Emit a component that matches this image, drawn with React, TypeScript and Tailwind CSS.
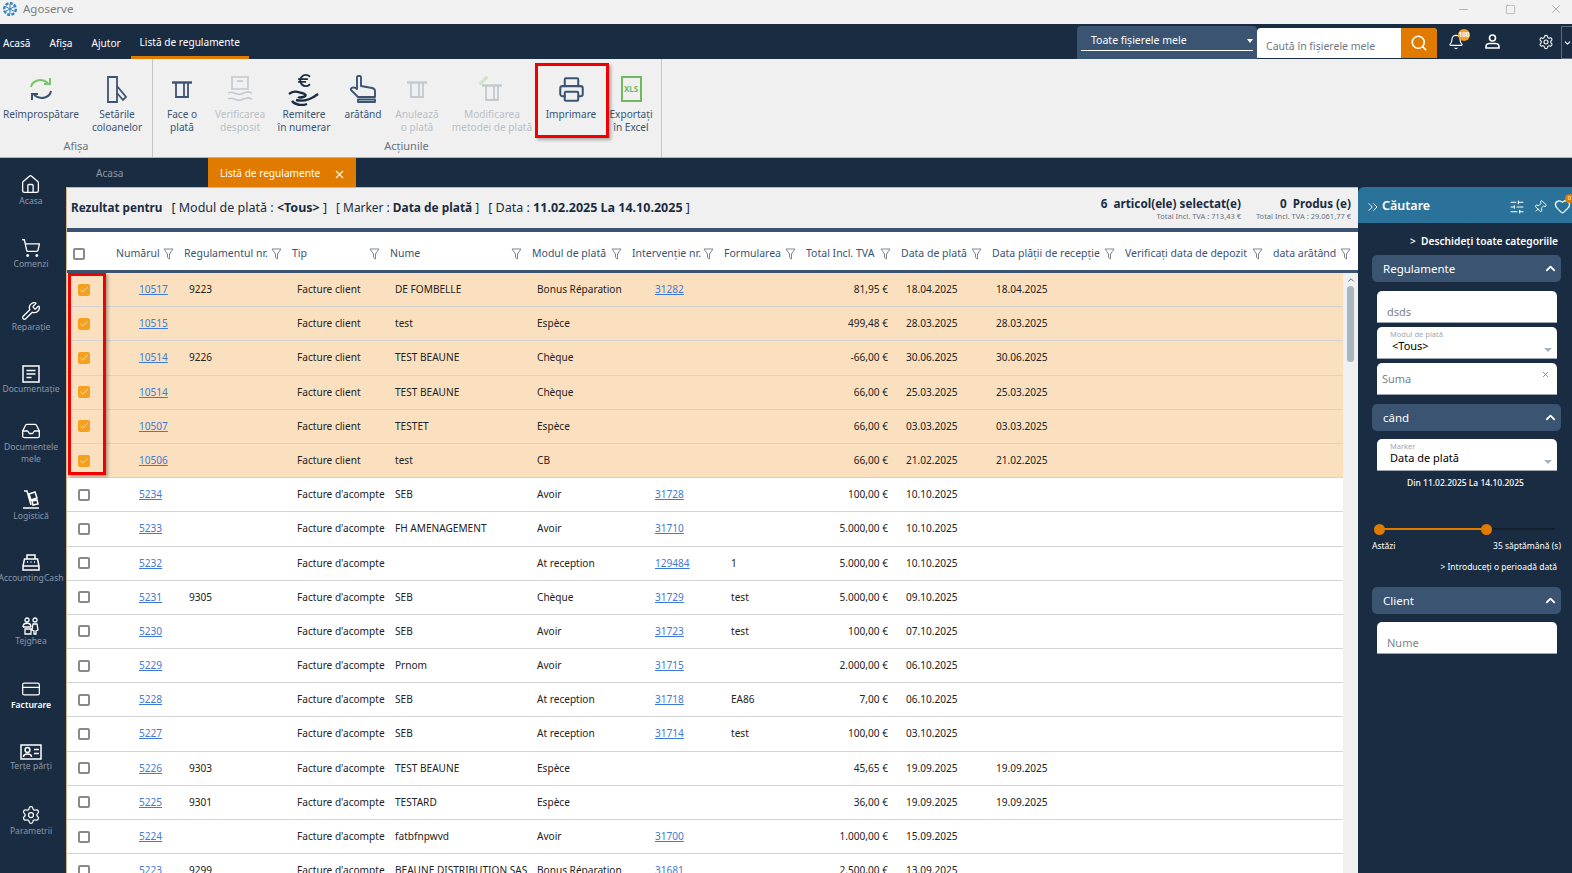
import { Check, ChevronDown, ChevronUp, Home, Inbox, Minus, Pin, Printer, Search, Settings, ShoppingCart, Square, Wrench, X, Bell, CreditCard, SlidersHorizontal, Heart, ChevronsRight, Euro } from 'lucide-react';
import type { ReactNode } from 'react';

const font = { fontFamily: '"Noto Sans", sans-serif' };

type Row = {
  num: string;
  reg?: string;
  tip: string;
  nume?: string;
  mod: string;
  iv?: string;
  form?: string;
  total: string;
  data: string;
  rec?: string;
  sel?: boolean;
};

const rows: Row[] = [
  { num: '10517', reg: '9223', tip: 'Facture client', nume: 'DE FOMBELLE', mod: 'Bonus Réparation', iv: '31282', total: '81,95 €', data: '18.04.2025', rec: '18.04.2025', sel: true },
  { num: '10515', tip: 'Facture client', nume: 'test', mod: 'Espèce', total: '499,48 €', data: '28.03.2025', rec: '28.03.2025', sel: true },
  { num: '10514', reg: '9226', tip: 'Facture client', nume: 'TEST BEAUNE', mod: 'Chèque', total: '-66,00 €', data: '30.06.2025', rec: '30.06.2025', sel: true },
  { num: '10514', tip: 'Facture client', nume: 'TEST BEAUNE', mod: 'Chèque', total: '66,00 €', data: '25.03.2025', rec: '25.03.2025', sel: true },
  { num: '10507', tip: 'Facture client', nume: 'TESTET', mod: 'Espèce', total: '66,00 €', data: '03.03.2025', rec: '03.03.2025', sel: true },
  { num: '10506', tip: 'Facture client', nume: 'test', mod: 'CB', total: '66,00 €', data: '21.02.2025', rec: '21.02.2025', sel: true },
  { num: '5234', tip: "Facture d'acompte", nume: 'SEB', mod: 'Avoir', iv: '31728', total: '100,00 €', data: '10.10.2025' },
  { num: '5233', tip: "Facture d'acompte", nume: 'FH AMENAGEMENT', mod: 'Avoir', iv: '31710', total: '5.000,00 €', data: '10.10.2025' },
  { num: '5232', tip: "Facture d'acompte", mod: 'At reception', iv: '129484', form: '1', total: '5.000,00 €', data: '10.10.2025' },
  { num: '5231', reg: '9305', tip: "Facture d'acompte", nume: 'SEB', mod: 'Chèque', iv: '31729', form: 'test', total: '5.000,00 €', data: '09.10.2025' },
  { num: '5230', tip: "Facture d'acompte", nume: 'SEB', mod: 'Avoir', iv: '31723', form: 'test', total: '100,00 €', data: '07.10.2025' },
  { num: '5229', tip: "Facture d'acompte", nume: 'Prnom', mod: 'Avoir', iv: '31715', total: '2.000,00 €', data: '06.10.2025' },
  { num: '5228', tip: "Facture d'acompte", nume: 'SEB', mod: 'At reception', iv: '31718', form: 'EA86', total: '7,00 €', data: '06.10.2025' },
  { num: '5227', tip: "Facture d'acompte", nume: 'SEB', mod: 'At reception', iv: '31714', form: 'test', total: '100,00 €', data: '03.10.2025' },
  { num: '5226', reg: '9303', tip: "Facture d'acompte", nume: 'TEST BEAUNE', mod: 'Espèce', total: '45,65 €', data: '19.09.2025', rec: '19.09.2025' },
  { num: '5225', reg: '9301', tip: "Facture d'acompte", nume: 'TESTARD', mod: 'Espèce', total: '36,00 €', data: '19.09.2025', rec: '19.09.2025' },
  { num: '5224', tip: "Facture d'acompte", nume: 'fatbfnpwvd', mod: 'Avoir', iv: '31700', total: '1.000,00 €', data: '15.09.2025' },
  { num: '5223', reg: '9299', tip: "Facture d'acompte", nume: 'BEAUNE DISTRIBUTION SAS', mod: 'Bonus Réparation', iv: '31681', total: '2.500,00 €', data: '13.09.2025' },
];

const headers = [
  { label: 'Numărul', w: 'w-[68px]' },
  { label: 'Regulamentul nr.', w: 'w-[108px]' },
  { label: 'Tip', w: 'w-[98px]' },
  { label: 'Nume', w: 'w-[142px]' },
  { label: 'Modul de plată', w: 'w-[100px]' },
  { label: 'Intervenție nr.', w: 'w-[92px]' },
  { label: 'Formularea', w: 'w-[82px]' },
  { label: 'Total Incl. TVA', w: 'w-[95px]' },
  { label: 'Data de plată', w: 'w-[91px]' },
  { label: 'Data plății de recepție', w: 'w-[133px]' },
  { label: 'Verificați data de depozit', w: 'w-[148px]' },
  { label: 'data arătând', w: 'w-[88px]' },
];

function FilterIcon() {
  return (
    <svg width="11" height="12" viewBox="0 0 11 12" fill="none" stroke="#7d8794" strokeWidth="1">
      <path d="M1 1h9L6.500 6v5L4.500 9.500V6z" />
    </svg>
  );
}

function Box({ checked }: { checked?: boolean }) {
  if (checked) {
    return (
      <div className="flex h-3 w-3 items-center justify-center rounded-[2px] bg-[#f5a11f]">
        <Check size={10} color="#fde7c4" strokeWidth={2} />
      </div>
    );
  }
  return <div className="h-3 w-3 rounded-[2px] border-2 border-[#8a8a8a] bg-white" />;
}

function Receipt({ color }: { color: string }) {
  return (
    <svg width="20" height="17" viewBox="0 0 20 17" fill="none" stroke={color} strokeWidth="1.800">
      <path d="M0 1.500h20" strokeWidth="2.400" />
      <path d="M4 2v14h12V2" />
      <path d="M12 2v14" />
    </svg>
  );
}

function RibbonButton({ w, icon, lines, off }: { w: string; icon: ReactNode; lines: string[]; off?: boolean }) {
  return (
    <div className={`flex shrink-0 flex-col items-center ${w}`}>
      <div className="mt-[13px] mb-[2px] flex h-[34px] items-center justify-center">{icon}</div>
      {lines.map((l) => (
        <div key={l} className={`h-[13px] whitespace-nowrap text-[10.1px] leading-[13px] ${off ? 'text-[#b9bfc6]' : 'text-[#3a5472]'}`}>
          {l}
        </div>
      ))}
    </div>
  );
}

function NavItem({ icon, lines, active }: { icon: ReactNode; lines: string[]; active?: boolean }) {
  return (
    <div className="flex h-[63px] flex-col items-center justify-center">
      {icon}
      {lines.map((l) => (
        <div key={l} className={`whitespace-nowrap text-[8.6px] leading-[12px] ${active ? 'font-semibold text-white' : 'text-[#8b98a8]'}`}>
          {l}
        </div>
      ))}
    </div>
  );
}

function SectionHead({ label }: { label: string }) {
  return (
    <div className="ml-[14px] mr-[11px] flex h-[27px] items-center justify-between rounded-[5px] bg-[#3a5472] pl-[11px] pr-[3px] text-[11.5px] text-white">
      {label}
      <ChevronUp size={15} strokeWidth={3} />
    </div>
  );
}

function Field({ h, label, value, placeholder, caret, clear, pad }: { h: string; label?: string; value?: string; placeholder?: string; caret?: boolean; clear?: boolean; pad?: string }) {
  return (
    <div className={`relative ml-[19px] mr-[15px] rounded-t-[5px] border-b border-[#9aa5b1] bg-white ${h}`}>
      {label && <div className="pl-[13px] pt-[3px] text-[7.5px] leading-[9px] text-[#a0a7b0]">{label}</div>}
      {value && <div className={`text-[11px] leading-[13px] text-black ${pad}`}>{value}</div>}
      {placeholder && <div className={`text-[11px] leading-[13px] text-[#7b838d] ${pad}`}>{placeholder}</div>}
      {caret && <div className="absolute bottom-[6px] right-[5px] h-0 w-0 border-x-[4px] border-t-[4px] border-x-transparent border-t-[#a9b2bb]" />}
      {clear && <X size={9} color="#5e6874" className="absolute right-[7px] top-[7px]" />}
    </div>
  );
}

function Tableau({ r }: { r: Row }) {
  return (
    <div className={`flex h-[34.2px] shrink-0 items-center border-b border-[#d3d3d3] text-[10.1px] text-[#222] ${r.sel ? 'bg-[#fae0bf]' : 'bg-white'}`}>
      <div className="w-[49px] shrink-0 pl-[11px]">
        <Box checked={r.sel} />
      </div>
      <div className="w-[68px] shrink-0 pl-[23px] text-[#3f7ad6] underline">{r.num}</div>
      <div className="w-[108px] shrink-0 pl-[5px]">{r.reg}</div>
      <div className="w-[98px] shrink-0 whitespace-nowrap pl-[5px]">{r.tip}</div>
      <div className="w-[142px] shrink-0 whitespace-nowrap pl-[5px]">{r.nume}</div>
      <div className="w-[100px] shrink-0 whitespace-nowrap pl-[5px]">{r.mod}</div>
      <div className="w-[92px] shrink-0 pl-[23px] text-[#3f7ad6] underline">{r.iv}</div>
      <div className="w-[82px] shrink-0 pl-[7px]">{r.form}</div>
      <div className="w-[95px] shrink-0 pr-[13px] text-right">{r.total}</div>
      <div className="w-[91px] shrink-0 pl-[5px]">{r.data}</div>
      <div className="w-[133px] shrink-0 pl-[4px]">{r.rec}</div>
    </div>
  );
}

export default function App() {
  return (
    <div className="relative flex h-[873px] w-[1572px] flex-col overflow-hidden bg-[#1a2c42]" style={font}>
      {/* title bar */}
      <div className="flex h-[24px] shrink-0 items-center bg-[#f2f2f2] pb-[6px] pl-[2px] text-[11.5px] text-[#7d7d7d]">
        <svg width="16" height="16" viewBox="0 0 16 16" fill="none" stroke="#2f86c0" strokeWidth="2.400">
          <circle cx="8" cy="8" r="5.800" strokeDasharray="3 1.400" />
          <path d="M8 3v10M3.500 5.500l9 5M12.500 5.500l-9 5" strokeWidth="1" />
        </svg>
        <span className="ml-[5px]">Agoserve</span>
        <div className="ml-auto flex items-center text-[#7d7d7d]">
          <Minus size={13} strokeWidth={1} className="mr-[35px]" />
          <Square size={11} strokeWidth={1} className="mr-[33px]" />
          <X size={14} strokeWidth={1} className="mr-[9px]" />
        </div>
      </div>

      {/* menu */}
      <div className="flex h-[35px] shrink-0 items-end bg-[#1a2c42] text-[10.1px] text-white">
        <div className="flex h-[35px] items-center pl-[3px] pt-[5px]">Acasă</div>
        <div className="ml-[19px] flex h-[35px] items-center pt-[5px]">Afișa</div>
        <div className="ml-[19px] flex h-[35px] items-center pt-[5px]">Ajutor</div>
        <div className="ml-[10px] flex h-[35px] w-[118px] items-center justify-center border-b-[3px] border-[#e07b00] pt-[5px]">Listă de regulamente</div>
        <div className="ml-auto flex h-[33px] w-[180px] flex-col rounded-t-[4px] bg-[#3a5472] px-[4px]">
          <div className="flex h-[25px] items-center justify-between border-b border-white pl-[10px] pt-[5px] text-[10.5px]">
            Toate fișierele mele
            <div className="h-0 w-0 border-x-[3.5px] border-t-[4px] border-x-transparent border-t-white" />
          </div>
        </div>
        <div className="mb-[1px] flex h-[30px] w-[180px] overflow-hidden rounded-t-[4px] bg-white">
          <div className="flex flex-1 items-center pl-[9px] pt-[7px] text-[10.5px] text-[#6f7782]">Caută în fișierele mele</div>
          <div className="flex w-[36px] items-center justify-center bg-[#e07b00]">
            <Search size={18} strokeWidth={2.2} />
          </div>
        </div>
        <div className="relative ml-[1px] flex h-[35px] w-[35px] items-center justify-center">
          <Bell size={16} strokeWidth={1.7} />
          <div className="absolute right-[3px] top-[5px] flex h-[12px] w-[12px] items-center justify-center overflow-hidden rounded-full bg-[#f5a11f] text-[6.5px] font-bold">100</div>
        </div>
        <div className="flex h-[35px] w-[38px] items-center justify-center">
          <svg width="15" height="15" viewBox="0 0 15 15" fill="none" stroke="#fff" strokeWidth="1.600">
            <circle cx="7.500" cy="4" r="3" />
            <path d="M1 14v-1.500c0-2 2-3 3.500-3h6c1.500 0 3.500 1 3.500 3V14z" />
          </svg>
        </div>
        <div className="flex h-[35px] w-[50px] items-center justify-center pl-[20px]">
          <Settings size={16} strokeWidth={1.6} />
        </div>
        <div className="flex h-[33px] w-[11px] items-center border border-r-0 border-[#5f6b78] pl-[1px]">
          <ChevronDown size={10} strokeWidth={3} />
        </div>
      </div>

      {/* ribbon */}
      <div className="flex h-[99px] shrink-0 border-b border-[#b5b5b5] bg-[#f0f0f0]">
        <div className="flex w-[153px] shrink-0 flex-col border-r border-[#c5c5c5]">
          <div className="flex">
            <RibbonButton
              w="w-[82px]"
              lines={['Reîmprospătare']}
              icon={
                <svg width="26" height="28" viewBox="0 0 26 28" fill="none" strokeWidth="2">
                  <path d="M3 12C4 6 13 2 20 8" stroke="#7cc36a" />
                  <path d="M16 9h6V3" stroke="#7cc36a" />
                  <path d="M23 16c-1 6-10 10-17 4" stroke="#3a5472" />
                  <path d="M10 19H4v6" stroke="#3a5472" />
                </svg>
              }
            />
            <RibbonButton
              w="w-[70px]"
              lines={['Setările', 'coloanelor']}
              icon={
                <svg width="22" height="27" viewBox="0 0 22 27" fill="none" stroke="#3a5472" strokeWidth="1.800">
                  <path d="M2 1h9v25H2z" />
                  <path d="M11 10l9 11-3 3-6-7" />
                </svg>
              }
            />
          </div>
          <div className="mt-auto pb-[3px] text-center text-[11px] text-[#68727e]">Afișa</div>
        </div>
        <div className="flex w-[509px] shrink-0 flex-col border-r border-[#c5c5c5]">
          <div className="flex">
            <RibbonButton w="w-[58px]" lines={['Face o', 'plată']} icon={<Receipt color="#3a5472" />} />
            <RibbonButton
              w="w-[58px]"
              off
              lines={['Verificarea', 'desposit']}
              icon={
                <svg width="28" height="26" viewBox="0 0 28 26" fill="none" stroke="#c3c9cf" strokeWidth="1.600">
                  <path d="M6 1h16v12H6z" />
                  <path d="M11 5h6" />
                  <path d="M2 17c5-3 8 3 13 1s6-3 11-1M2 23c5-3 8 3 13 1s6-3 11-1" />
                </svg>
              }
            />
            <RibbonButton
              w="w-[70px]"
              lines={['Remitere', 'în numerar']}
              icon={
                <div className="flex h-[34px] w-[32px] flex-col items-center">
                  <Euro size={17} color="#1a2c42" strokeWidth={2.6} />
                  <svg width="32" height="17" viewBox="0 0 32 17" fill="none" stroke="#1a2c42" strokeWidth="2.400">
                    <path d="M1 5c5-4 9-2 13-1s5 3 1 4-5 0-5 0M8 11c8 2 14 0 22-6M4 12c3 4 10 5 15 3" />
                  </svg>
                </div>
              }
            />
            <RibbonButton
              w="w-[48px]"
              lines={['arătând']}
              icon={
                <svg width="26" height="28" viewBox="0 0 26 28" fill="none" stroke="#3a5472" strokeWidth="1.900" strokeLinejoin="round">
                  <path d="M7 2c0-1.500 4-1.500 4 0v9l11 2c2 .5 3 1.500 3 3v6H8l-7-7c-1-2 3-4 6-1z" />
                  <path d="M8 24.500h17V27H8z" />
                </svg>
              }
            />
            <RibbonButton w="w-[60px]" off lines={['Anulează', 'o plată']} icon={<Receipt color="#c3c9cf" />} />
            <RibbonButton
              w="w-[90px]"
              off
              lines={['Modificarea', 'metodei de plată']}
              icon={
                <div className="relative pt-[6px]">
                  <Receipt color="#c3c9cf" />
                  <div className="absolute -left-[4px] top-[1px] h-[3px] w-[11px] -rotate-45 bg-[#cfe3c6]" />
                </div>
              }
            />
            <RibbonButton w="w-[68px]" lines={['Imprimare']} icon={<Printer size={27} color="#3a5472" strokeWidth={1.8} />} />
            <RibbonButton
              w="w-[52px]"
              lines={['Exportați', 'în Excel']}
              icon={
                <div className="flex h-[26px] w-[21px] items-center justify-center border-2 border-[#6fb95f] text-[8px] font-bold text-[#6fb95f]">
                  XLS
                </div>
              }
            />
          </div>
          <div className="mt-auto pb-[3px] pr-[1px] text-center text-[11px] text-[#68727e]">Acțiunile</div>
        </div>
      </div>

      {/* tabs */}
      <div className="flex h-[29px] shrink-0 bg-[#1a2c42] pl-[66px] text-[10.1px]">
        <div className="flex w-[142px] items-center pl-[30px] pt-[3px] text-[#8b98a8]">Acasa</div>
        <div className="flex w-[148px] items-center justify-between bg-[#e07b00] pl-[12px] pr-[10px] pt-[3px] text-white">
          Listă de regulamente
          <X size={13} strokeWidth={2} />
        </div>
      </div>

      <div className="flex min-h-0 flex-1">
        {/* sidebar */}
        <div className="-mt-[28px] flex w-[66px] shrink-0 flex-col items-center pr-[4px]">
          <NavItem icon={<Home size={21} color="#fff" strokeWidth={1.5} />} lines={['Acasa']} />
          <NavItem icon={<ShoppingCart size={20} color="#fff" strokeWidth={1.6} />} lines={['Comenzi']} />
          <NavItem icon={<Wrench size={20} color="#fff" strokeWidth={1.5} />} lines={['Reparație']} />
          <NavItem
            icon={
              <svg width="18" height="18" viewBox="0 0 18 18" fill="none" stroke="#fff" strokeWidth="1.500">
                <path d="M1 1h16v16H1zM4.500 5.500h9M4.500 9h9M4.500 12.500h5" />
              </svg>
            }
            lines={['Documentație']}
          />
          <NavItem icon={<Inbox size={20} color="#fff" strokeWidth={1.6} />} lines={['Documentele', 'mele']} />
          <NavItem
            icon={
              <svg width="18" height="21" viewBox="0 0 18 21" fill="none" stroke="#fff" strokeWidth="1.500">
                <path d="M2 2h3l4 14M1 19h16M7 5l6-2 2 6-6 2zM10 12l5-1 1 4-5 1z" />
              </svg>
            }
            lines={['Logistică']}
          />
          <NavItem
            icon={
              <svg width="18" height="18" viewBox="0 0 18 18" fill="none" stroke="#fff" strokeWidth="1.500">
                <path d="M5 5V1h8v4M2.500 5h13l1.500 7v4H1v-4zM1 12h16M5 8h1M8.500 8h1M12 8h1" />
              </svg>
            }
            lines={['AccountingCash']}
          />
          <NavItem
            icon={
              <svg width="18" height="18" viewBox="0 0 18 18" fill="none" stroke="#fff" strokeWidth="1.300">
                <circle cx="5" cy="3" r="2" />
                <circle cx="13" cy="3" r="2" />
                <path d="M1 10c0-5 8-5 8 0M1 10h8M3 12h6v5H3zM11 7h4l1 6-2 1v3h-2v-3l-2-1z" />
              </svg>
            }
            lines={['Tejghea']}
          />
          <NavItem icon={<CreditCard size={20} color="#fff" strokeWidth={1.5} />} active lines={['Facturare']} />
          <NavItem
            icon={
              <svg width="22" height="16" viewBox="0 0 22 16" fill="none" stroke="#fff" strokeWidth="1.500">
                <path d="M1 1h20v14H1z" />
                <circle cx="7.500" cy="6" r="2.400" />
                <path d="M3.500 13c0-4 8-4 8 0M14 5.500h5M14 9.500h5" />
              </svg>
            }
            lines={['Terțe părți']}
          />
          <NavItem icon={<Settings size={20} color="#fff" strokeWidth={1.5} />} lines={['Parametrii']} />
        </div>

        {/* main */}
        <div className="flex w-[1292px] min-w-0 shrink-0 flex-col border-l border-t border-[#d9b68a] bg-white">
          <div className="flex h-[44px] shrink-0 items-center justify-between border-b-4 border-[#3a5472] bg-[#f0f0f0] pl-[4px] pr-[7px] text-[12.5px] text-[#1a2c42]">
            <div className="whitespace-nowrap">
              <span className="text-[11.7px] font-bold">Rezultat pentru</span>
              <span className="ml-[9px]">[ Modul de plată : </span>
              <span className="font-bold">&lt;Tous&gt;</span>
              <span> ]</span>
              <span className="ml-[9px] text-[11.9px]">[ Marker : </span>
              <span className="text-[11.9px] font-bold">Data de plată</span>
              <span className="text-[11.9px]"> ]</span>
              <span className="ml-[9px]">[ Data : </span>
              <span className="font-bold">11.02.2025 La 14.10.2025</span>
              <span> ]</span>
            </div>
            <div className="flex gap-[15px]">
              <div className="flex flex-col items-end">
                <div className="text-[11.7px] font-bold leading-[15px]">6&nbsp; articol(ele) selectat(e)</div>
                <div className="text-[7.5px] leading-[10px] text-[#66707c]">Total Incl. TVA : 713,43 €</div>
              </div>
              <div className="flex flex-col items-end">
                <div className="text-[11.7px] font-bold leading-[15px]">0&nbsp; Produs (e)</div>
                <div className="text-[7.5px] leading-[10px] text-[#66707c]">Total Incl. TVA : 29.061,77 €</div>
              </div>
            </div>
          </div>

          <div className="flex h-[41px] shrink-0 items-center border-b-[3px] border-[#3a5472] bg-white pt-[6px] text-[10.5px] text-[#3a5472]">
            <div className="w-[49px] shrink-0 pl-[6px]">
              <Box />
            </div>
            {headers.map((h) => (
              <div key={h.label} className={`flex shrink-0 items-center justify-between pr-[10px] ${h.w}`}>
                <span className="whitespace-nowrap">{h.label}</span>
                <FilterIcon />
              </div>
            ))}
          </div>

          <div className="flex min-h-0 flex-1">
            <div className="flex min-w-0 flex-1 flex-col overflow-hidden">
              {rows.map((r) => (
                <Tableau key={r.num + r.data} r={r} />
              ))}
            </div>
            <div className="flex w-[15px] shrink-0 flex-col items-center bg-[#f0f0f0] pt-[2px]">
              <ChevronUp size={10} color="#555" strokeWidth={2} />
              <div className="mt-[1px] h-[76px] w-[7px] rounded-full bg-[#a9b4bf]" />
            </div>
          </div>
        </div>

        {/* search panel */}
        <div className="flex min-w-0 flex-1 flex-col bg-[#1a2c42] text-white">
          <div className="flex h-[36px] shrink-0 items-center rounded-tl-[6px] bg-[#2a7299] pl-[7px] pr-[1px] pt-[3px]">
            <ChevronsRight size={16} strokeWidth={1.4} />
            <span className="ml-[1px] text-[12.5px] font-semibold">Căutare</span>
            <SlidersHorizontal size={16} strokeWidth={1.6} className="ml-auto" />
            <Pin size={14} strokeWidth={1.6} className="ml-[8px] rotate-45" />
            <div className="relative ml-[7px]">
              <Heart size={17} strokeWidth={1.8} />
              <div className="absolute -right-[3px] -top-[4px] flex h-[9px] w-[9px] items-center justify-center rounded-full bg-[#e07b00] text-[6px]">0</div>
            </div>
          </div>
          <div className="flex h-[32px] shrink-0 items-end justify-end pb-[6px] pr-[14px] text-[10.2px] font-semibold">&gt;&nbsp; Deschideți toate categoriile</div>
          <SectionHead label="Regulamente" />
          <div className="mt-[9px] flex flex-col gap-[4px]">
            <Field h="h-[32px]" placeholder="dsds" pad="pl-[10px] pt-[14px]" />
            <Field h="h-[32px]" label="Modul de plată" value="<Tous>" pad="pl-[15px]" caret />
            <Field h="h-[32px]" placeholder="Suma" pad="pl-[5px] pt-[9px]" clear />
          </div>
          <div className="mt-[9px]">
            <SectionHead label="când" />
          </div>
          <div className="mt-[8px]">
            <Field h="h-[32px]" label="Marker" value="Data de plată" pad="pl-[13px]" caret />
          </div>
          <div className="mt-[4px] pl-[1px] text-center text-[8.5px] font-medium leading-[16px]">Din 11.02.2025 La 14.10.2025</div>
          <div className="relative mx-[16px] mt-[33px] h-[11px] shrink-0">
            <div className="absolute left-[6px] top-[4px] h-[2px] w-[175px] bg-[#14202f]" />
            <div className="absolute left-[6px] top-[4px] h-[2px] w-[107px] bg-[#e07b00]" />
            <div className="absolute left-0 top-0 h-[11px] w-[11px] rounded-full bg-[#e07b00]" />
            <div className="absolute left-[107px] top-0 h-[11px] w-[11px] rounded-full bg-[#e07b00]" />
          </div>
          <div className="ml-[14px] mr-[11px] mt-[5px] flex justify-between text-[8.5px] leading-[12px]">
            <span>Astăzi</span>
            <span>35 săptămână (s)</span>
          </div>
          <div className="mt-[9px] pr-[15px] text-right text-[8.5px] leading-[12px]">&gt; Introduceți o perioadă dată</div>
          <div className="mt-[14px]">
            <SectionHead label="Client" />
          </div>
          <div className="mt-[8px]">
            <Field h="h-[32px]" placeholder="Nume" pad="pl-[10px] pt-[14px]" />
          </div>
        </div>
      </div>

      {/* annotations */}
      <div className="absolute left-[535px] top-[63px] h-[75px] w-[74px] border-[3px] border-[#f00000] shadow-[2px_2px_3px_rgba(0,0,0,0.3)]" />
      <div className="absolute left-[68px] top-[273px] h-[202px] w-[38px] border-[3px] border-[#f00000] shadow-[2px_2px_3px_rgba(0,0,0,0.3)]" />
    </div>
  );
}
